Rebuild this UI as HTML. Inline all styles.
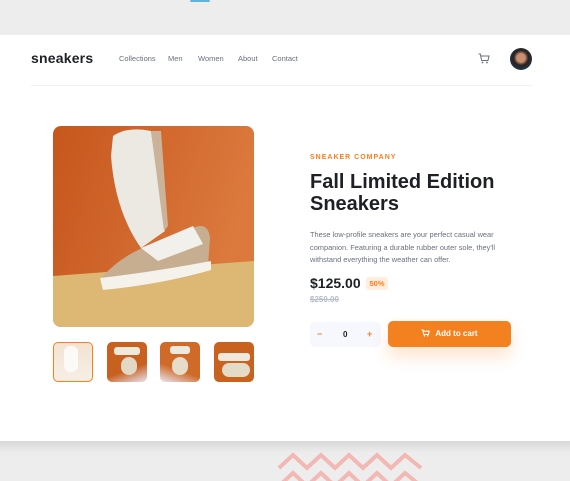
<!DOCTYPE html><html><head><style>
*{margin:0;padding:0;box-sizing:border-box}
body{width:570px;height:481px;background:#ededed;position:relative;overflow:hidden;font-family:"Liberation Sans",sans-serif}
.card{position:absolute;left:0;top:35px;width:570px;height:406px;background:#fff}
.abs{position:absolute}
.nav a{position:absolute;top:19px;font-size:7.5px;color:#69707d}
</style></head><body>
<div class="abs" style="left:190px;top:0;width:20px;height:2px;background:#5fb4d8;border-radius:2px"></div>
<div class="card">
<div class="abs" style="left:31px;top:15px;font-size:14px;font-weight:bold;color:#1d2025;letter-spacing:0.2px">sneakers</div>
<div class="nav"><a style="left:119px">Collections</a><a style="left:168px">Men</a><a style="left:198px">Women</a><a style="left:238px">About</a><a style="left:272px">Contact</a></div>
<svg class="abs" style="left:478px;top:18px" width="12" height="11" viewBox="0 0 12 11"><path d="M0.5 1H2.3L3.6 7.5H10L11 3H3" fill="none" stroke="#69707d" stroke-width="1"/><circle cx="4.5" cy="9.5" r="0.9" fill="#69707d"/><circle cx="9" cy="9.5" r="0.9" fill="#69707d"/></svg>
<div class="abs" style="left:510px;top:13px;width:22px;height:22px;border-radius:50%;background:radial-gradient(circle at 50% 45%,#c89070 0 25%,#2a2220 45%,#1e3a50 80%)"></div>
<div class="abs" style="left:31px;top:50px;width:501px;height:1px;background:#eef0f4"></div>
<svg class="abs" style="left:53px;top:91px;border-radius:8px" width="201" height="201" viewBox="0 0 201 201">
<defs><linearGradient id="o" x1="0" y1="0" x2="1" y2="0.3"><stop offset="0" stop-color="#c6561c"/><stop offset="1" stop-color="#dc7a3e"/></linearGradient></defs>
<rect width="201" height="201" fill="url(#o)"/>
<path d="M0 150 L201 135 L201 201 L0 201Z" fill="#ddb774"/>
<path d="M60 10 Q75 0 98 5 L112 105 L88 122 Q62 85 58 30Z" fill="#ece9e2"/>
<path d="M98 5 L108 5 L115 100 L111 105Z" fill="#cbb39a"/>
<path d="M50 150 Q70 128 100 118 L140 102 Q155 95 157 112 L155 140 Q150 152 100 155 L55 162 Q45 160 50 150Z" fill="#c7ae90"/>
<path d="M88 122 L140 100 L150 118 L105 135Z" fill="#f2f0ec"/>
<path d="M47 152 Q100 146 158 135 L158 144 Q110 158 50 164Z" fill="#f4f2ea"/>
</svg>
<div class="abs" style="left:53px;top:307px;width:40px;height:40px;border-radius:5px;border:1.5px solid #ff7e1b;background:linear-gradient(#f3e3d2,#f6efe6)"></div>
<div class="abs" style="left:64px;top:311px;width:14px;height:26px;border-radius:6px;background:#fbfaf7"></div>
<div class="abs" style="left:107px;top:307px;width:40px;height:40px;border-radius:5px;background:linear-gradient(160deg,#c8601f 65%,#e8e4f0)"></div>
<div class="abs" style="left:160px;top:307px;width:40px;height:40px;border-radius:5px;background:linear-gradient(200deg,#cf6a28 65%,#e8e8f4)"></div>
<div class="abs" style="left:214px;top:307px;width:40px;height:40px;border-radius:5px;background:#c9621f"></div>
<div class="abs" style="left:170px;top:311px;width:20px;height:8px;border-radius:3px;background:#efe8dc"></div>
<div class="abs" style="left:172px;top:322px;width:16px;height:18px;border-radius:8px;background:#e6dcc8"></div>
<div class="abs" style="left:114px;top:312px;width:26px;height:8px;border-radius:3px;background:#efe8dc"></div>
<div class="abs" style="left:121px;top:322px;width:16px;height:18px;border-radius:8px;background:#e3d8c4"></div>
<div class="abs" style="left:218px;top:318px;width:32px;height:8px;border-radius:3px;background:#efe8dc"></div>
<div class="abs" style="left:222px;top:328px;width:28px;height:14px;border-radius:7px;background:#e4dac8"></div>
<div class="abs" style="left:310px;top:119px;font-size:7px;font-weight:bold;color:#ff7e1b;letter-spacing:1px">SNEAKER COMPANY</div>
<div class="abs" style="left:310px;top:136px;font-size:20px;font-weight:bold;color:#1d2025;line-height:22px;width:220px">Fall Limited Edition Sneakers</div>
<div class="abs" style="left:310px;top:194px;font-size:7.4px;color:#69707d;line-height:12.5px;width:205px">These low-profile sneakers are your perfect casual wear companion. Featuring a durable rubber outer sole, they'll withstand everything the weather can offer.</div>
<div class="abs" style="left:310px;top:240px;font-size:14px;font-weight:bold;color:#1d2025">$125.00</div>
<div class="abs" style="left:366px;top:242px;width:22px;height:13px;background:#ffede0;border-radius:3px;font-size:7.5px;font-weight:bold;color:#ff7e1b;text-align:center;line-height:13px">50%</div>
<div class="abs" style="left:310px;top:260px;font-size:8px;font-weight:bold;color:#b6bcc8;text-decoration:line-through">$250.00</div>
<div class="abs" style="left:310px;top:287px;width:71px;height:25px;background:#f6f8fd;border-radius:5px;font-size:9px;font-weight:bold;line-height:25px">
<span class="abs" style="left:7px;color:#ff7e1b">−</span><span class="abs" style="left:33px;color:#1d2025;font-size:8px">0</span><span class="abs" style="left:57px;color:#ff7e1b">+</span></div>
<div class="abs" style="left:388px;top:286px;width:123px;height:26px;background:#f48120;border-radius:5px;box-shadow:0 10px 16px rgba(255,126,27,.2);color:#fff;font-size:8px;font-weight:bold;line-height:26px;text-align:center">
<svg style="vertical-align:-1px;margin-right:5px" width="9" height="8" viewBox="0 0 12 11"><path d="M0.5 1H2.3L3.6 7.5H10L11 3H3" fill="none" stroke="#fff" stroke-width="1.4"/><circle cx="4.5" cy="9.5" r="1" fill="#fff"/><circle cx="9" cy="9.5" r="1" fill="#fff"/></svg>Add to cart</div>
</div>
<div class="abs" style="left:0;top:441px;width:570px;height:12px;background:linear-gradient(#d8d8d8,#ededed)"></div>
<svg class="abs" style="left:276px;top:450px" width="150" height="31" viewBox="0 0 150 31"><path d="M3 18 L17 5 L31 18 L45 5 L59 18 L73 5 L87 18 L101 5 L115 18 L129 5 L145 18" fill="none" stroke="#f2b8b4" stroke-width="4"/><path d="M3 36 L17 23 L31 36 L45 23 L59 36 L73 23 L87 36 L101 23 L115 36 L129 23 L145 36" fill="none" stroke="#f2b8b4" stroke-width="4"/></svg>
</body></html>
